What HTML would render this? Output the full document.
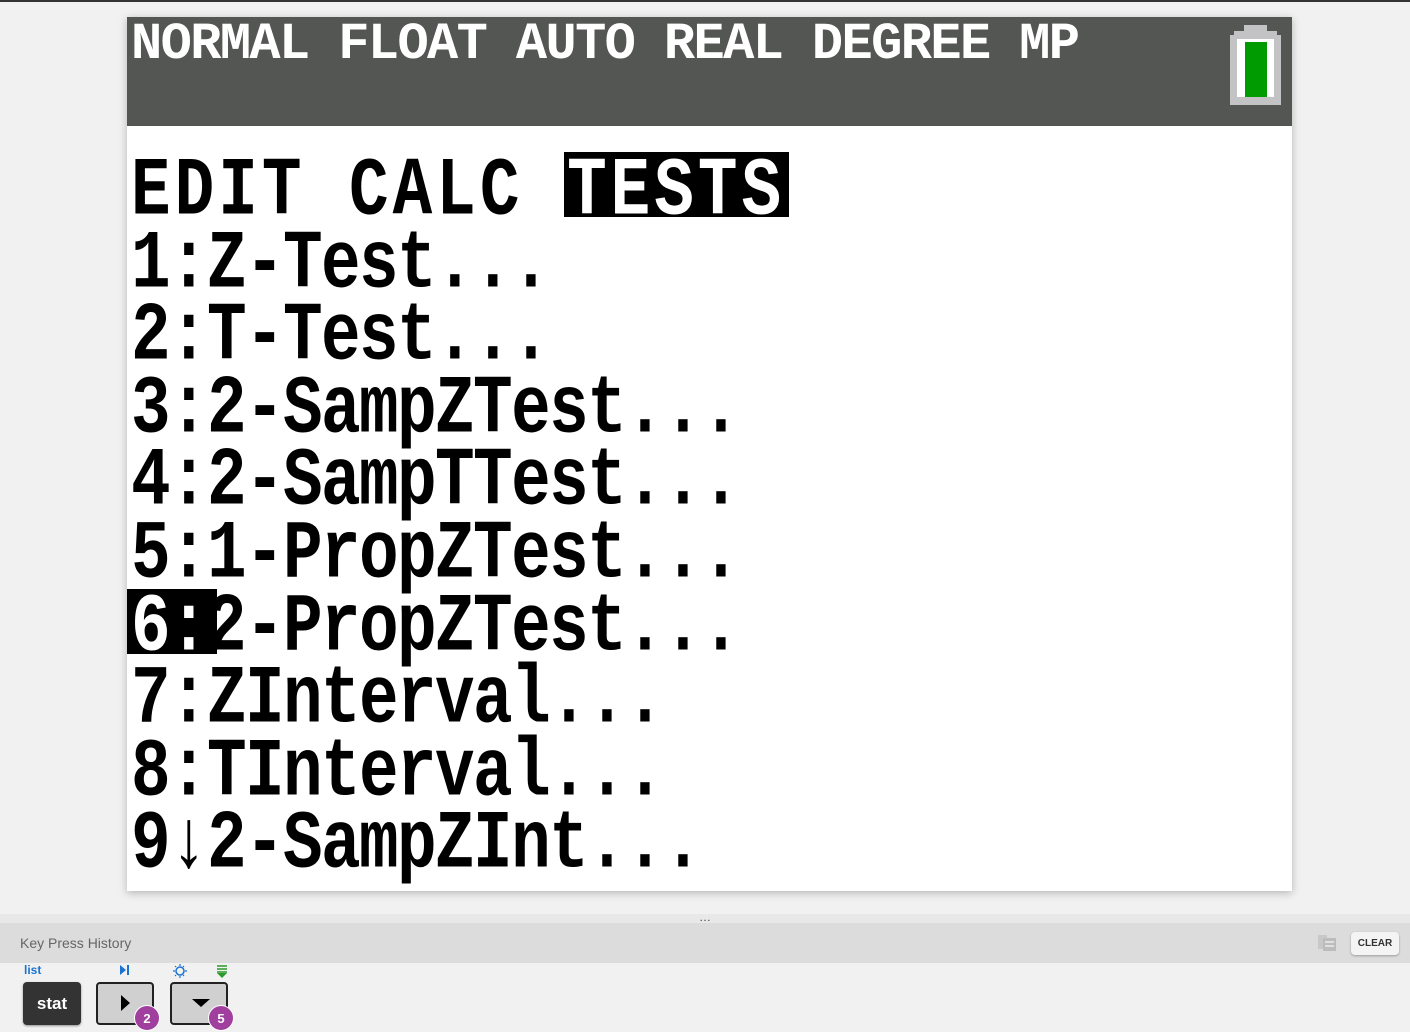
<!DOCTYPE html>
<html><head><style>
*{margin:0;padding:0;box-sizing:border-box}
body{width:1410px;height:1031px;background:#f1f1f1;position:relative;overflow:hidden;font-family:"Liberation Sans",sans-serif}
.topline{position:absolute;left:0;top:0;width:1410px;height:2px;background:#333}
.screen{position:absolute;left:127px;top:17px;width:1165px;height:874px;background:#fff;box-shadow:0 2px 8px rgba(0,0,0,.25)}
.hdr{position:absolute;left:0;top:0;width:1165px;height:109px;background:#545653}
.hdr span{position:absolute;left:4px;top:0px;color:#fff;font-family:"Liberation Mono",monospace;font-weight:bold;font-size:52px;letter-spacing:-1.6px;line-height:56px;white-space:pre}
.row{position:absolute;left:4px;height:66px;line-height:66px;font-family:"Liberation Mono",monospace;font-weight:bold;font-size:66px;letter-spacing:-1.6px;white-space:pre;color:#000;transform:scaleY(1.25);transform-origin:0 0}
.hlb{position:absolute;background:#000}
.w{color:#fff}
.bar1{position:absolute;left:0;top:914px;width:1410px;height:9px;background:#e8e8e8;text-align:center;font-size:12px;line-height:6px;color:#444}
.bar2{position:absolute;left:0;top:923px;width:1410px;height:40px;background:#dcdcdc}
.bar2 .t{position:absolute;left:20px;top:12px;font-size:14px;color:#666}
.clear{position:absolute;left:1351px;top:9px;width:48px;height:23px;background:#f4f4f4;border-radius:4px;box-shadow:0 1px 2px rgba(0,0,0,.3);font-size:10px;font-weight:bold;color:#333;text-align:center;line-height:23px}
.key{position:absolute;top:982px;width:58px;height:43px;border-radius:4px}
.badge{position:absolute;width:26px;height:26px;border-radius:13px;background:#a03f9e;color:#fff;font-size:13px;font-weight:bold;text-align:center;line-height:26px;border:1px solid #fff}
</style></head><body>
<div class="topline"></div>
<div class="screen">
 <div class="hdr"><span>NORMAL FLOAT AUTO REAL DEGREE MP</span>
  <svg style="position:absolute;left:1103px;top:8px" width="51" height="80" viewBox="0 0 51 80">
   <rect x="14" y="0" width="23" height="8" fill="#c3c2c5"/>
   <rect x="4" y="6" width="43" height="8" fill="#c3c2c5"/>
   <rect x="0" y="10" width="51" height="70" fill="#c3c2c5"/>
   <rect x="7" y="14" width="37" height="58" fill="#fff"/>
   <rect x="15" y="17" width="22" height="55" fill="#009b00"/>
  </svg>
 </div>
 <div class="hlb" style="left:437px;top:135px;width:225px;height:65px"></div>
 <div class="hlb" style="left:0;top:572px;width:90px;height:65px"></div>
 <div class="row" style="top:134px;letter-spacing:4px">EDIT CALC <span class="w">TESTS</span></div>
 <div class="row" style="top:207px">1:Z-Test...</div>
 <div class="row" style="top:279px">2:T-Test...</div>
 <div class="row" style="top:352px">3:2-SampZTest...</div>
 <div class="row" style="top:424px">4:2-SampTTest...</div>
 <div class="row" style="top:497px">5:1-PropZTest...</div>
 <div class="row" style="top:570px"><span class="w">6:</span>2-PropZTest...</div>
 <div class="row" style="top:642px">7:ZInterval...</div>
 <div class="row" style="top:715px">8:TInterval...</div>
 <div class="row" style="top:787px">9↓2-SampZInt...</div>
</div>
<div class="bar1">…</div>
<div class="bar2"><div class="t">Key Press History</div>
 <svg style="position:absolute;left:1317px;top:11px" width="20" height="18"><rect x="1" y="1" width="9" height="14" fill="#c8c8c8"/><rect x="6" y="4" width="13" height="13" fill="#bcbcbc"/><rect x="8" y="7" width="9" height="2" fill="#e0e0e0"/><rect x="8" y="11" width="9" height="2" fill="#e0e0e0"/></svg>
 <div class="clear">CLEAR</div>
</div>
<div style="position:absolute;left:24px;top:963px;font-size:12px;font-weight:bold;color:#1a73d0">list</div>
<div class="key" style="left:23px;background:#333;color:#fff;font-size:17px;font-weight:bold;text-align:center;line-height:43px;box-shadow:0 1px 2px rgba(0,0,0,.4)">stat</div>
<div style="position:absolute;left:120px;top:965px;width:0;height:0;border-left:6px solid #1a73d0;border-top:5px solid transparent;border-bottom:5px solid transparent"></div>
<div style="position:absolute;left:127px;top:965px;width:2px;height:10px;background:#1a73d0"></div>
<div class="key" style="left:96px;background:#d0d0d0;border:2px solid #222"><div style="position:absolute;left:23px;top:11px;border-left:9px solid #000;border-top:8px solid transparent;border-bottom:8px solid transparent"></div></div>
<div class="badge" style="left:134px;top:1005px">2</div>
<svg style="position:absolute;left:172px;top:964px" width="16" height="14"><circle cx="8" cy="7" r="4" fill="none" stroke="#1a73d0" stroke-width="1.5"/><path d="M8 0v2M8 12v2M1 7h2M13 7h2M3 2l1 1M12 2l-1 1M3 12l1-1M12 12l-1-1" stroke="#1a73d0" stroke-width="1.2"/></svg>
<svg style="position:absolute;left:216px;top:965px" width="12" height="14"><path d="M1 1h10M1 4h10M1 7h10" stroke="#2a9a2a" stroke-width="1.5"/><path d="M1 8h10l-5 5z" fill="#2a9a2a"/></svg>
<div class="key" style="left:170px;background:#d0d0d0;border:2px solid #222"><div style="position:absolute;left:20px;top:15px;border-top:8px solid #000;border-left:9px solid transparent;border-right:9px solid transparent"></div></div>
<div class="badge" style="left:208px;top:1005px">5</div>
</body></html>
